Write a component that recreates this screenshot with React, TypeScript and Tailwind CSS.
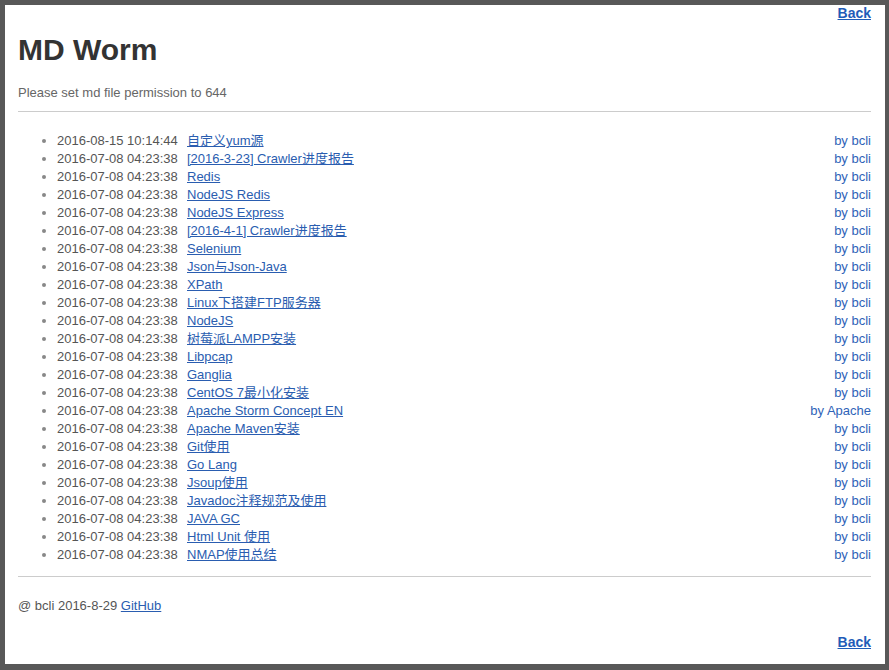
import React from "react";

const items: [string, string, string][] = [
  ["2016-08-15 10:14:44", "自定义yum源", "bcli"],
  ["2016-07-08 04:23:38", "[2016-3-23] Crawler进度报告", "bcli"],
  ["2016-07-08 04:23:38", "Redis", "bcli"],
  ["2016-07-08 04:23:38", "NodeJS Redis", "bcli"],
  ["2016-07-08 04:23:38", "NodeJS Express", "bcli"],
  ["2016-07-08 04:23:38", "[2016-4-1] Crawler进度报告", "bcli"],
  ["2016-07-08 04:23:38", "Selenium", "bcli"],
  ["2016-07-08 04:23:38", "Json与Json-Java", "bcli"],
  ["2016-07-08 04:23:38", "XPath", "bcli"],
  ["2016-07-08 04:23:38", "Linux下搭建FTP服务器", "bcli"],
  ["2016-07-08 04:23:38", "NodeJS", "bcli"],
  ["2016-07-08 04:23:38", "树莓派LAMPP安装", "bcli"],
  ["2016-07-08 04:23:38", "Libpcap", "bcli"],
  ["2016-07-08 04:23:38", "Ganglia", "bcli"],
  ["2016-07-08 04:23:38", "CentOS 7最小化安装", "bcli"],
  ["2016-07-08 04:23:38", "Apache Storm Concept EN", "Apache"],
  ["2016-07-08 04:23:38", "Apache Maven安装", "bcli"],
  ["2016-07-08 04:23:38", "Git使用", "bcli"],
  ["2016-07-08 04:23:38", "Go Lang", "bcli"],
  ["2016-07-08 04:23:38", "Jsoup使用", "bcli"],
  ["2016-07-08 04:23:38", "Javadoc注释规范及使用", "bcli"],
  ["2016-07-08 04:23:38", "JAVA GC", "bcli"],
  ["2016-07-08 04:23:38", "Html Unit 使用", "bcli"],
  ["2016-07-08 04:23:38", "NMAP使用总结", "bcli"],
];

export default function App() {
  return (
    <div
      className="h-[670px] w-[889px] bg-[#585858] pt-[5px] pl-[5px] pr-[4px] pb-[6px]"
      style={{ fontFamily: '"Liberation Sans", "Noto Sans CJK SC", Arial, sans-serif' }}
    >
      <div className="h-full bg-white pl-[13px] pr-[14px] pt-[1px]">
        <div className="flex justify-end">
          <a href="#" className="text-[14px] leading-[14px] font-bold text-[#1f5cb8] underline">
            Back
          </a>
        </div>
        <h1 className="mt-[12px] text-[30px] leading-[36px] font-bold text-[#333]">MD Worm</h1>
        <p className="mt-[16px] text-[13px] leading-[18px] text-[#666]">
          Please set md file permission to 644
        </p>
        <hr className="mt-[9px] border-t border-[#cccccc]" />
        <ul className="mt-[20px] list-disc pl-[39px] text-[13px] leading-[18px] marker:text-[#888]">
          {items.map(([d, t, a], i) => (
            <li key={i}>
              <span className="float-right text-[#2f63b8]">by {a}</span>
              <span className="inline-block w-[130px] text-[#555]">{d}</span>
              <a href="#" className="text-[#2a5db0] underline">
                {t}
              </a>
            </li>
          ))}
        </ul>
        <hr className="mt-[12px] border-t border-[#cccccc]" />
        <p className="mt-[20px] text-[13px] leading-[18px] text-[#555]">
          @ bcli 2016-8-29{" "}
          <a href="#" className="text-[#2a5db0] underline">
            GitHub
          </a>
        </p>
        <div className="mt-[20px] flex justify-end">
          <a href="#" className="text-[14px] leading-[14px] font-bold text-[#1f5cb8] underline">
            Back
          </a>
        </div>
      </div>
    </div>
  );
}
